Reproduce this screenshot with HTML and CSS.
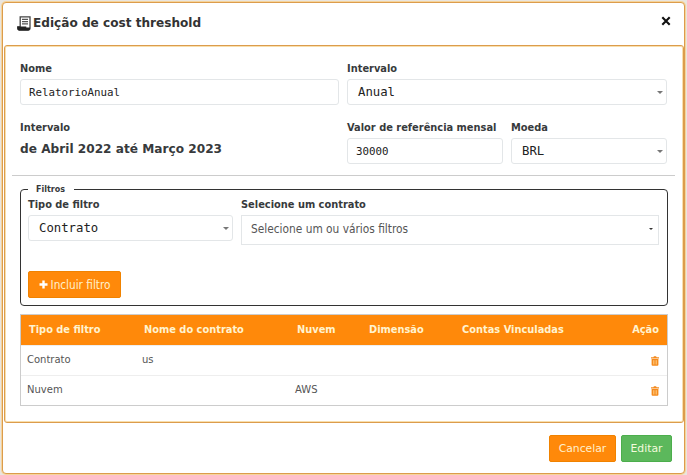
FILE: index.html
```html
<!DOCTYPE html>
<html lang="pt-BR">
<head>
<meta charset="utf-8">
<title>Edição de cost threshold</title>
<link rel="stylesheet" href="styles.css">
</head>
<body>
<div class="modal">
  <header class="modal-header">
    <svg class="receipt" viewBox="0 0 14 15"><path d="M3.2 0.8H13V12.5Q13 14 11.5 14H2Q0.8 14 0.8 12V10.8H3.2Z" fill="#fff" stroke="#444" stroke-width="1.3"/><path d="M0.3 10.5H9.3V11.5H13V12.5Q13 14.4 11 14.4H2Q0.3 14.2 0.3 12Z" fill="#222"/><path d="M5 3.3H11M5 5.6H11M5 7.9H11" stroke="#555" stroke-width="1.2"/></svg>
    <h1>Edição de cost threshold</h1>
    <svg class="close" viewBox="0 0 10 10"><path d="M1.3 1.3L8.7 8.7M8.7 1.3L1.3 8.7" stroke="#111" stroke-width="2.1"/></svg>
  </header>
  <main class="modal-body">
    <div class="form-grid">
      <div class="field half"><label>Nome</label><div class="control mono small">RelatorioAnual</div></div>
      <div class="field half"><label>Intervalo</label><div class="control mono select">Anual<i class="caret"></i></div></div>
      <div class="field half"><label>Intervalo</label><strong class="period">de Abril 2022 até Março 2023</strong></div>
      <div class="field"><label>Valor de referência mensal</label><div class="control mono small">30000</div></div>
      <div class="field"><label>Moeda</label><div class="control mono select">BRL<i class="caret"></i></div></div>
    </div>
    <hr>
    <fieldset>
      <legend>Filtros</legend>
      <div class="filters">
        <div class="field type"><label>Tipo de filtro</label><div class="control mono select">Contrato<i class="caret"></i></div></div>
        <div class="field"><label>Selecione um contrato</label><div class="control multi">Selecione um ou vários filtros<i class="caret dark"></i></div></div>
      </div>
      <button class="btn add"><svg class="plus" viewBox="0 0 9 9"><path d="M4.5 0.5V8.5M0.5 4.5H8.5" stroke="#fff" stroke-width="2.4"/></svg><span>Incluir filtro</span></button>
    </fieldset>
    <div class="table">
      <div class="row head"><span>Tipo de filtro</span><span>Nome do contrato</span><span>Nuvem</span><span>Dimensão</span><span>Contas Vinculadas</span><span>Ação</span></div>
      <div class="row"><span>Contrato</span><span>us</span><span></span><span></span><span></span><span><svg class="trash" viewBox="0 0 8 10"><path d="M0 1.3H2.3L3 .3H5L5.7 1.3H8V2.4H0ZM.6 3H7.4V8.8Q7.4 9.8 6.4 9.8H1.6Q.6 9.8 .6 8.8Z" fill="#f58a1c"/><path d="M2.5 4.2V8.5M4 4.2V8.5M5.5 4.2V8.5" stroke="#ffd08a" stroke-width=".7"/></svg></span></div>
      <div class="row"><span>Nuvem</span><span></span><span>AWS</span><span></span><span></span><span><svg class="trash" viewBox="0 0 8 10"><path d="M0 1.3H2.3L3 .3H5L5.7 1.3H8V2.4H0ZM.6 3H7.4V8.8Q7.4 9.8 6.4 9.8H1.6Q.6 9.8 .6 8.8Z" fill="#f58a1c"/><path d="M2.5 4.2V8.5M4 4.2V8.5M5.5 4.2V8.5" stroke="#ffd08a" stroke-width=".7"/></svg></span></div>
    </div>
  </main>
  <footer class="modal-footer">
    <button class="btn cancel">Cancelar</button>
    <button class="btn edit">Editar</button>
  </footer>
</div>
</body>
</html>
```
FILE: styles.css
```css
* { box-sizing: border-box; }
body { margin: 0; height: 475px; padding: 2px 2px 1px; overflow: hidden; background: #e9e5df; font-family: "DejaVu Sans", sans-serif; font-size: 10px; color: #373a3c; }
.modal { height: 472px; width: 683px; display: flex; flex-direction: column; background: #fff; border: 1px solid #dc9c4c; border-radius: 4px; box-shadow: 0 0 0 1px #f5d49c; }
.modal-header { height: 42px; display: flex; align-items: center; padding: 0 13px 2px 14px; }
.receipt { width: 14px; height: 15px; margin-right: 2px; }
h1 { margin: 0; flex: 1; font-size: 12.1px; color: #333; }
.close { width: 10px; height: 10px; margin-top: -4px; }
.modal-body { height: 378px; border: 1px solid #dc9c4c; box-shadow: inset 0 0 0 1px #f8dfae; border-radius: 3px; padding: 15px 16px 0 15px; margin: 0 0 0 1px; }
.form-grid { display: grid; grid-template-columns: 156px 155px 156px 156px; column-gap: 8px; row-gap: 15px; }
.half { grid-column: span 2; }
.field { display: flex; flex-direction: column; min-width: 0; }
label { height: 18px; line-height: 15px; font-size: 9.85px; font-weight: bold; white-space: nowrap; }
.control { height: 26px; display: flex; align-items: center; border: 1px solid #e3e6e8; border-radius: 3px; padding: 0 3px 0 10px; background: #fff; white-space: nowrap; }
.mono { font-family: "DejaVu Sans Mono", monospace; font-size: 12.3px; color: #222; }
.small { font-size: 10.8px; padding-left: 8px; }
.caret { margin-left: auto; border: 3px solid transparent; border-top-color: #777; border-bottom: 0; }
.dark { border-width: 2.5px; border-bottom: 0; border-top-color: #333; }
.period { font-size: 12.15px; line-height: 18px; margin-top: 2px; }
hr { width: 663px; margin: 11px 0 8px -8px; border: 0; border-top: 1px solid #ccc; }
fieldset { width: 648px; height: 122px; margin: 0; padding: 2px 8px 0 7px; border: 1px solid #333; border-radius: 4px; min-width: 0; }
legend { height: 11px; line-height: 11px; padding: 0 9px 0 8px; font-size: 8px; font-weight: bold; }
.filters { display: flex; gap: 8px; }
.filters .field { flex: 1; }
.filters .type { flex: 0 0 205px; }
.multi { height: 30px; font-family: "DejaVu Sans Condensed", "DejaVu Sans", sans-serif; font-size: 11.8px; padding: 0 5px 3px 9px; border-radius: 0; color: #555; }
.btn { height: 27px; border: 1px solid #f08200; border-radius: 2px; background: #ff890a; color: #fff0cc; font-family: "DejaVu Sans", sans-serif; font-size: 10.8px; padding: 0; white-space: nowrap; }
.add { width: 93px; margin-top: 26px; display: flex; align-items: center; justify-content: center; gap: 3px; font-family: "DejaVu Sans Condensed", "DejaVu Sans", sans-serif; font-size: 11.7px; }
.plus { width: 9px; height: 9px; }
.table { width: 648px; margin-top: 8px; border: 1px solid #ccc; }
.row { height: 30px; display: grid; grid-template-columns: 115px 153px 72px 93px 158px 1fr; align-items: center; padding: 0 8px 2px 6px; color: #555; font-size: 10px; border-top: 1px solid #eee; }
.row span:last-child { text-align: right; }
.head { background: #ff890a; color: #fff3d0; font-size: 9.85px; font-weight: bold; padding-left: 8px; border: 0; }
.trash { width: 8px; height: 10px; vertical-align: middle; margin-top: 2px; }
.modal-footer { flex: 1; display: flex; justify-content: flex-end; align-items: center; gap: 5px; padding: 0 12px 0 0; }
.cancel { width: 67px; }
.edit { width: 51px; background: #5cb85c; border-color: #4cae4c; color: #f4fbdc; }
```
